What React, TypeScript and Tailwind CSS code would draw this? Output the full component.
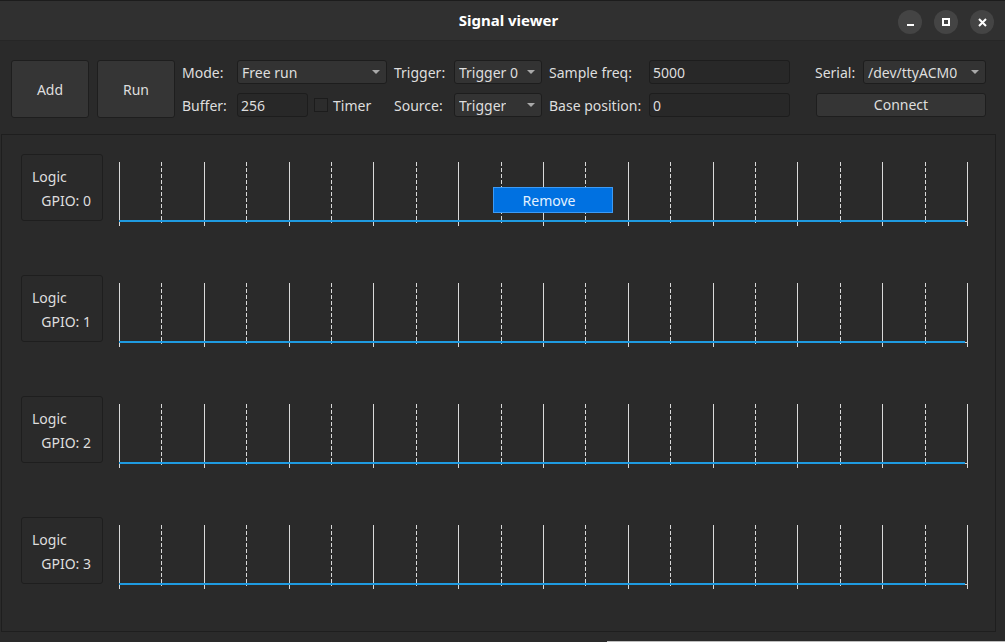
import React from 'react';

const font = { fontFamily: '"Noto Sans", "Open Sans", sans-serif' };
const TICKS = Array.from({ length: 21 }, (_, i) => i);

const Arrow = () => (
  <svg width="8" height="4" viewBox="0 0 8 4" className="shrink-0">
    <path d="M0 0 L8 0 L4 4 Z" fill="#a9a9a9" />
  </svg>
);

const Combo = ({ value, w }: { value: string; w: string }) => (
  <div className={`${w} flex h-[24px] items-center justify-between rounded-[3px] border border-[#1d1d1d] bg-[#333333] pl-[4px] pr-[6px]`}>
    <span className="truncate">{value}</span>
    <Arrow />
  </div>
);

const Field = ({ value, w }: { value: string; w: string }) => (
  <div className={`${w} flex h-[24px] items-center rounded-[3px] border border-[#1d1d1d] bg-[#282828] pl-[3px]`}>
    {value}
  </div>
);

const Chart = () => (
  <svg width={856} height={76} className="ml-[14px] shrink-0">
    {TICKS.map(i => {
      const x = Math.round(2 + i * 42.4) + 0.5;
      const solid = i % 2 === 0;
      return (
        <line
          key={i}
          x1={x}
          x2={x}
          y1={8}
          y2={solid ? 72 : 69}
          stroke="#d9d9d9"
          strokeWidth={1}
          strokeDasharray={solid ? undefined : '4 2'}
        />
      );
    })}
    <line x1={2} x2={848} y1={67} y2={67} stroke="#1f9be1" strokeWidth={2} />
    <line x1={848} x2={851} y1={67.5} y2={67.5} stroke="#cfcfcf" strokeWidth={1} />
  </svg>
);

const Channel = ({ gpio }: { gpio: number }) => (
  <div className="flex h-[121px] items-start">
    <div className="ml-[19px] flex h-[67px] w-[82px] shrink-0 flex-col gap-[4px] rounded-[3px] border border-[#1e1e1e] pt-[12px]">
      <div className="h-[20px] pl-[10px] leading-[20px]">Logic</div>
      <div className="h-[20px] pr-[11px] text-right leading-[20px]">GPIO: {gpio}</div>
    </div>
    <Chart />
  </div>
);

export default function App() {
  return (
    <div style={font} className="flex h-[642px] w-[1005px] flex-col overflow-hidden bg-[#2a2a2a] text-[14px] text-[#dedede]">
      {/* title bar */}
      <div className="relative flex h-[41px] shrink-0 items-center justify-center border-t border-b border-t-[#1c1c1c] border-b-[#262626] bg-[#303030]">
        <span className="pl-[12px] text-[15px] font-bold text-white">Signal viewer</span>
        <div className="absolute right-[11px] top-[9px] flex gap-[12px]">
          <div className="flex h-[24px] w-[24px] items-end justify-center rounded-full bg-[#444444] pb-[8px]">
            <div className="h-[2px] w-[7px] bg-white" />
          </div>
          <div className="flex h-[24px] w-[24px] items-center justify-center rounded-full bg-[#444444]">
            <div className="h-[8px] w-[8px] border-2 border-white" />
          </div>
          <div className="flex h-[24px] w-[24px] items-center justify-center rounded-full bg-[#444444]">
            <svg width="9" height="9" viewBox="0 0 9 9">
              <path d="M1 1 L8 8 M8 1 L1 8" stroke="white" strokeWidth="2" />
            </svg>
          </div>
        </div>
      </div>

      {/* toolbar */}
      <div className="flex items-start pl-[11px] pt-[19px]">
        <button className="h-[58px] w-[78px] rounded-[3px] border border-[#1e1e1e] bg-[#353535]">Add</button>
        <button className="ml-[8px] h-[58px] w-[78px] rounded-[3px] border border-[#1e1e1e] bg-[#353535]">Run</button>
        <div className="ml-[7px] grid grid-cols-[55px_157px_60px_95px_100px_166px_48px_123px] items-center gap-y-[9px]">
          <span>Mode:</span>
          <Combo value="Free run" w="w-[150px]" />
          <span>Trigger:</span>
          <Combo value="Trigger 0" w="w-[88px]" />
          <span>Sample freq:</span>
          <Field value="5000" w="w-[141px]" />
          <span>Serial:</span>
          <Combo value="/dev/ttyACM0" w="w-[123px]" />

          <span>Buffer:</span>
          <div className="flex items-center">
            <Field value="256" w="w-[71px]" />
            <div className="ml-[6px] h-[14px] w-[14px] border border-[#1c1c1c] bg-[#2c2c2c]" />
            <span className="ml-[5px]">Timer</span>
          </div>
          <span>Source:</span>
          <Combo value="Trigger" w="w-[88px]" />
          <span>Base position:</span>
          <Field value="0" w="w-[141px]" />
          <button className="col-span-2 -mt-[1px] ml-[1px] h-[24px] w-[170px] rounded-[3px] border border-[#1e1e1e] bg-[#353535]">
            Connect
          </button>
        </div>
      </div>

      {/* channels panel */}
      <div className="relative ml-[1px] mt-[16px] h-[498px] w-[995px] shrink-0 border border-[#1e1e1e] pt-[19px]">
        <Channel gpio={0} />
        <Channel gpio={1} />
        <Channel gpio={2} />
        <Channel gpio={3} />
        <div className="absolute left-[491px] top-[52px] flex h-[26px] w-[120px] items-center justify-center border border-[#3d9bf5] bg-[#0071e1] pr-[8px] text-[#e3f1ff]">
          Remove
        </div>
      </div>

      <div className="mt-auto flex h-[1px] justify-end">
        <div className="h-[1px] w-[398px] bg-[#bdbdbd]" />
      </div>
    </div>
  );
}
